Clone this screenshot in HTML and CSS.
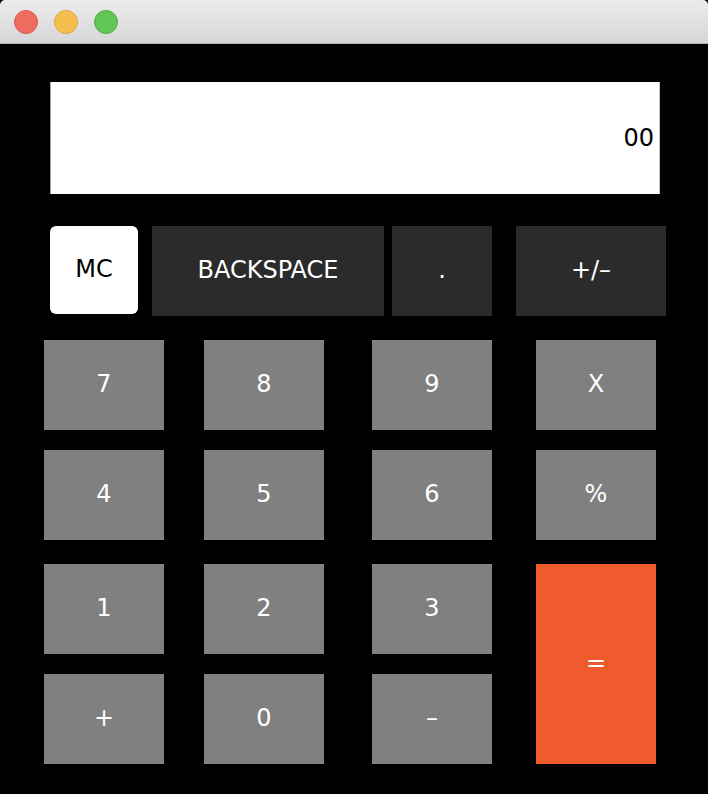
FILE: index.html
```html
<!DOCTYPE html>
<html>
<head>
<meta charset="utf-8">
<link rel="stylesheet" href="styles.css">
</head>
<body>
<div class="window">
  <div class="titlebar">
    <span class="light red"></span>
    <span class="light yellow"></span>
    <span class="light green"></span>
  </div>
  <div class="content">
    <div class="display">00</div>
    <div class="toprow">
      <div class="btn mc">MC</div>
      <div class="btn dark backspace">BACKSPACE</div>
      <div class="btn dark dot">.</div>
      <div class="btn dark sign">+/–</div>
    </div>
    <div class="keys">
      <div class="btn gray c1 r1">7</div>
      <div class="btn gray c2 r1">8</div>
      <div class="btn gray c3 r1">9</div>
      <div class="btn gray c4 r1">X</div>
      <div class="btn gray c1 r2">4</div>
      <div class="btn gray c2 r2">5</div>
      <div class="btn gray c3 r2">6</div>
      <div class="btn gray c4 r2">%</div>
      <div class="btn gray c1 r3">1</div>
      <div class="btn gray c2 r3">2</div>
      <div class="btn gray c3 r3">3</div>
      <div class="btn orange c4 r3 tall">=</div>
      <div class="btn gray c1 r4">+</div>
      <div class="btn gray c2 r4">0</div>
      <div class="btn gray c3 r4">–</div>
    </div>
  </div>
</div>
</body>
</html>
```

FILE: styles.css
```css
html, body {
  margin: 0;
  padding: 0;
  background: #000;
}
body {
  width: 708px;
  height: 794px;
  overflow: hidden;
  font-family: "DejaVu Sans", "Liberation Sans", sans-serif;
}
.window {
  width: 708px;
  height: 794px;
  display: flex;
  flex-direction: column;
  background: #000;
}
.titlebar {
  height: 43px;
  border-bottom: 1px solid #b4b4b4;
  background: linear-gradient(#ececec, #d6d6d6);
  border-radius: 5px 5px 0 0;
  display: flex;
  align-items: center;
  padding-left: 14px;
  gap: 16px;
  box-sizing: content-box;
}
.light {
  width: 22px;
  height: 22px;
  border-radius: 50%;
  display: block;
  margin-top: 1px;
}
.red { background: #ee6b60; border: 1px solid #d85a50; }
.yellow { background: #f6be4f; border: 1px solid #dea43b; }
.green { background: #62c655; border: 1px solid #4fae43; }

.content {
  flex: 1;
  display: flex;
  flex-direction: column;
  padding: 38px 0 0 0;
}
.display {
  margin-left: 50px;
  height: 112px;
  background: #fff;
  border-left: 1px solid #a8a8a8;
  border-right: 1px solid #c8c8c8;
  display: flex;
  align-items: center;
  justify-content: flex-end;
  padding-right: 5px;
  padding-bottom: 1px;
  box-sizing: border-box;
  width: 610px;
  font-size: 24px;
  color: #000;
}
.toprow {
  margin-top: 32px;
  margin-left: 50px;
  display: flex;
  align-items: flex-start;
  height: 90px;
}
.btn {
  display: flex;
  align-items: center;
  justify-content: center;
  font-size: 24px;
  color: #fff;
  padding-bottom: 3px;
  box-sizing: border-box;
}
.mc {
  width: 88px;
  height: 88px;
  background: #fff;
  color: #000;
  border-radius: 6px;
}
.dark { background: #2b2b2b; height: 90px; }
.backspace { width: 232px; margin-left: 14px; }
.dot { width: 100px; margin-left: 8px; }
.sign { width: 150px; margin-left: 24px; }

.keys {
  margin-top: 24px;
  margin-left: 44px;
  display: grid;
  grid-template-columns: 120px 40px 120px 48px 120px 44px 120px;
  grid-template-rows: 90px 20px 90px 24px 90px 20px 90px;
}
.gray { background: #808080; }
.orange { background: #f05b2d; }
.c1 { grid-column: 1; }
.c2 { grid-column: 3; }
.c3 { grid-column: 5; }
.c4 { grid-column: 7; }
.r1 { grid-row: 1; }
.r2 { grid-row: 3; }
.r3 { grid-row: 5; }
.r4 { grid-row: 7; }
.tall { grid-row: 5 / 8; }
```
